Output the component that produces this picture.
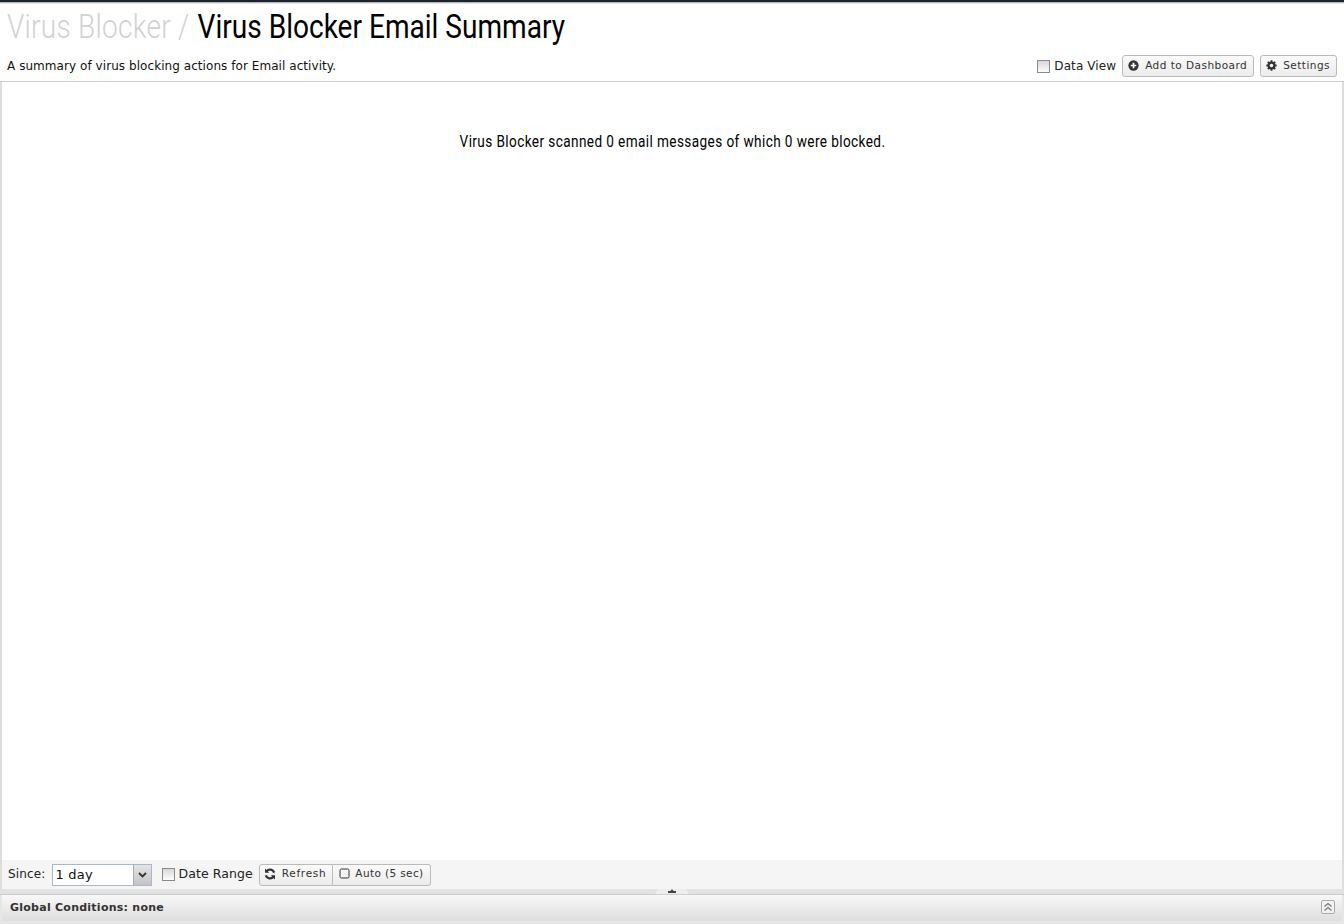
<script>
  const tools = [];
</script>

<div class="page">
  <header class="head">
    <h1 class="title"><span class="inner"><span class="crumb">Virus Blocker /</span><span class="current">Virus Blocker Email Summary</span></span></h1>
    <div class="subrow">
      <p class="desc">A summary of virus blocking actions for Email activity.</p>
      <div class="actions">
        <label class="check"><span class="box"></span>Data View</label>
        <button class="btn wide">
          <svg width="11" height="11" viewBox="0 0 12 12"><circle cx="6" cy="6" r="5.6" fill="#333"/><path d="M6 3v6M3 6h6" stroke="#fff" stroke-width="1.9"/></svg>
          Add to Dashboard
        </button>
        <button class="btn wide">
          <svg width="11" height="11" viewBox="0 0 12 12"><circle cx="6" cy="6" r="3.2" fill="none" stroke="#333" stroke-width="2.4"/><path d="M6 .4v2.4M6 9.2v2.4M.4 6h2.4M9.2 6h2.4M2 2l1.7 1.7M8.3 8.3L10 10M2 10l1.7-1.7M8.3 3.7L10 2" stroke="#333" stroke-width="2"/></svg>
          Settings
        </button>
      </div>
    </div>
  </header>

  <main class="content">
    <p class="summary"><span class="summary-inner">Virus Blocker scanned 0 email messages of which 0 were blocked.</span></p>
  </main>

  <div class="toolbar">
    <span class="since">Since:</span>
    <div class="select">
      <span class="value">1 day</span>
      <span class="arrow"><svg width="9" height="6" viewBox="0 0 9 6"><path d="M1 1l3.5 3.5L8 1" fill="none" stroke="#333" stroke-width="1.8"/></svg></span>
    </div>
    <label class="check range"><span class="box"></span><span class="range-text">Date Range</span></label>
    <div class="group">
      <button class="btn seg">
        <svg width="12" height="12" viewBox="0 0 12 12"><path d="M10.2 4.6A4.4 4.4 0 0 0 2.6 3.2M1.8 7.4a4.4 4.4 0 0 0 7.6 1.4" fill="none" stroke="#333" stroke-width="2.3"/><path d="M1 .6v4.2h4.2zM11 11.4V7.2H6.8z" fill="#333"/></svg>
        Refresh
      </button>
      <button class="btn seg last">
        <svg width="11" height="11" viewBox="0 0 11 11"><rect x="1" y="1" width="9" height="9" rx="1.5" fill="none" stroke="#333"/></svg>
        Auto (5 sec)
      </button>
    </div>
  </div>

  <div class="splitter">
    <span class="handle"><svg width="8" height="4" viewBox="0 0 8 4"><path d="M4 0l1.5 2H8v2H0V2h2.5z" fill="#444"/></svg></span>
  </div>

  <div class="conditions">
    <span class="cond-label">Global Conditions: none</span>
    <span class="collapse"><svg width="10" height="10" viewBox="0 0 10 10"><path d="M1.5 4.5L5 1.5l3.5 3M1.5 8.5L5 5.5l3.5 3" fill="none" stroke="#777" stroke-width="1.3"/></svg></span>
  </div>
</div>

<style>
  :global(body) { margin: 0; background: #fff; }
  .page {
    box-sizing: border-box;
    width: 1344px;
    height: 924px;
    display: flex;
    flex-direction: column;
    overflow: hidden;
    border-top: 2px solid #1c2230;
    background: #e6e6e6;
    font-family: "DejaVu Sans", sans-serif;
    color: #111;
  }
  .head {
    height: 80px;
    flex: none;
    box-sizing: border-box;
    background: linear-gradient(#9a9ca3, #fff 2px);
    border-bottom: 1px solid #ccc;
    padding: 0 7px;
    display: flex;
    flex-direction: column;
  }
  .title {
    margin: 0;
    height: 50px;
    font-family: Roboto, sans-serif;
    font-weight: 400;
    font-size: 34px;
    line-height: 49px;
    white-space: nowrap;
    color: #000;
  }
  .inner {
    display: inline-flex;
    transform: scaleX(0.825);
    transform-origin: left center;
  }
  .crumb { color: #d2d2d2; font-weight: 300; letter-spacing: 0.3px; margin-right: 10px; }
  .subrow {
    display: flex;
    justify-content: space-between;
    align-items: center;
    height: 28px;
  }
  .desc { margin: 0; font-size: 12px; color: #111; letter-spacing: 0.06px; }
  .actions { display: flex; align-items: center; gap: 6px; }
  .check { display: flex; align-items: center; font-size: 12px; color: #222; gap: 4px; letter-spacing: 0.1px; }
  .box {
    box-sizing: border-box;
    width: 13px;
    height: 13px;
    border: 1px solid #8a8a8a;
    background: linear-gradient(#d8d8d8, #fdfdfd);
    display: inline-block;
  }
  .btn {
    box-sizing: border-box;
    height: 22px;
    padding: 0 6px 2px 5px;
    display: inline-flex;
    align-items: center;
    gap: 5px;
    border: 1px solid #bbb;
    border-radius: 3px;
    background: linear-gradient(#fafafa, #ececec);
    font-family: "DejaVu Sans", sans-serif;
    font-size: 10.5px;
    letter-spacing: 0.47px;
    color: #333;
    cursor: pointer;
  }
  .wide { gap: 6px; }
  .content { flex: 1; border-left: 2px solid #ddd; border-right: 2px solid #ddd; background: #fff; min-height: 0; }
  .summary {
    margin: 50px 0 0;
    text-align: center;
    font-family: Roboto, sans-serif;
    font-size: 16px;
    line-height: 20px;
    color: #000;
  }
  .summary-inner { display: inline-block; transform: scaleX(0.85); letter-spacing: 0.47px; }
  .toolbar {
    flex: none;
    height: 29px;
    box-sizing: border-box;
    background: #f5f5f5;
    border-left: 2px solid #ddd;
    border-right: 2px solid #ddd;
    padding-left: 6px;
    display: flex;
    align-items: center;
  }
  .since { font-size: 12px; color: #222; letter-spacing: 0.15px; margin-bottom: 1px; }
  .select {
    box-sizing: border-box;
    margin-left: 7px;
    width: 100px;
    height: 22px;
    border: 1px solid #a9b7d0;
    background: #fff;
    display: flex;
    align-items: stretch;
  }
  .value { flex: 1; font-size: 13px; padding: 2px 0 0 2px; color: #111; letter-spacing: 0.2px; }
  .arrow {
    width: 17px;
    background: linear-gradient(#e4e4e4, #c4c4c4);
    border-left: 1px solid #aaa;
    display: flex;
    align-items: center;
    justify-content: center;
  }
  .range { margin-left: 10px; font-size: 12.5px; letter-spacing: 0.08px; gap: 3px; }
  .range-text { margin-bottom: 2px; }
  .group { display: flex; margin-left: 6px; }
  .seg { border-radius: 3px 0 0 3px; padding: 0 6px 4px 4px; gap: 6px; letter-spacing: 0.7px; }
  .seg svg { margin-top: 2px; }
  .seg.last { border-left: 0; border-radius: 0 3px 3px 0; padding: 0 6px 4px 6px; gap: 5px; letter-spacing: 0.38px; }
  .splitter {
    flex: none;
    height: 6px;
    background: #e2e2e2;
    border-bottom: 1px solid #ccc;
    box-sizing: border-box;
    position: relative;
    display: flex;
    justify-content: center;
  }
  .handle {
    box-sizing: border-box;
    width: 34px;
    height: 5px;
    background: #eee;
    clip-path: polygon(3px 0, 31px 0, 34px 100%, 0 100%);
    display: flex;
    justify-content: center;
    align-items: flex-end;
    padding-bottom: 1px;
  }
  .conditions {
    flex: none;
    box-sizing: border-box;
    height: 26px;
    margin: 0 2px 3px;
    background: linear-gradient(#f8f8f8, #dedede);
    display: flex;
    align-items: center;
    justify-content: space-between;
    padding: 0 7px 2px 8px;
  }
  .cond-label { font-size: 11px; font-weight: 700; color: #333; letter-spacing: 0.25px; }
  .collapse {
    box-sizing: border-box;
    width: 14px;
    height: 14px;
    border: 1px solid #aaa;
    border-radius: 2px;
    background: #f2f2f2;
    display: flex;
    align-items: center;
    justify-content: center;
  }
</style>
